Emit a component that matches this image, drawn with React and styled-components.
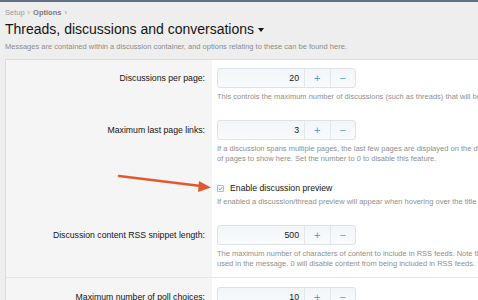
import React from "react";
import styled, { createGlobalStyle } from "styled-components";

const GlobalStyle = createGlobalStyle`
  html, body {
    margin: 0;
    overflow: hidden;
  }
  body {
    background: #eeeeee;
    font-family: "Liberation Sans", Arial, sans-serif;
    color: #141414;
  }
`;

const TopBar = styled.div`
  height: 2px;
  background: #5f7083;
`;

const Page = styled.div`
  position: relative;
  width: 680px;
`;

const Header = styled.div`
  padding: 6px 5px 0;
`;

const Crumbs = styled.div`
  font-size: 7.5px;
  line-height: 9px;
  color: #9b9b9b;

  b {
    color: #7a7a7a;
    font-weight: bold;
  }
  i {
    font-style: normal;
    margin: 0 3px;
  }
`;

const Title = styled.h1`
  margin: 4px 0 0;
  font-size: 14px;
  line-height: 17px;
  font-weight: normal;
  color: #141414;
  display: flex;
  align-items: center;
`;

const Caret = styled.span`
  display: inline-block;
  margin-left: 4px;
  margin-top: 1px;
  border-left: 3.5px solid transparent;
  border-right: 3.5px solid transparent;
  border-top: 4px solid #141414;
`;

const Desc = styled.div`
  margin-top: 4px;
  font-size: 7.5px;
  line-height: 10px;
  color: #8c8c8c;
`;

const Block = styled.div`
  margin: 7px 0 0 5px;
  border: 1px solid #dcdcdc;
  border-right: none;
  background: #fff;
`;

const Row = styled.div`
  display: grid;
  grid-template-columns: 206px 1fr;
  border-top: ${(p) => (p.$sep ? "1px solid #e6e6e6" : "none")};
`;

const Label = styled.div`
  background: #f5f5f5;
  padding: ${(p) => (p.$top ? p.$top : 8)}px 7px 0 0;
  text-align: right;
  font-size: 8.7px;
  line-height: 20px;
`;

const Field = styled.div`
  padding: ${(p) => (p.$top ? p.$top : 8)}px 0 ${(p) => (p.$bottom ? p.$bottom : 10)}px 5px;
`;

const Spinner = styled.div`
  display: flex;
  width: 139px;
  height: 20px;
  box-sizing: border-box;
  border: 1px solid #dbe2e9;
  border-radius: 3px;
  background: linear-gradient(180deg, #f3f6f9 0%, #f8fafc 100%);
  overflow: hidden;
`;

const NumBox = styled.div`
  flex: 0 0 87px;
  text-align: right;
  padding-right: 5px;
  box-sizing: border-box;
  font-size: 8.7px;
  line-height: 18px;
  color: #141414;
  border-right: 1px solid #e2e8ee;
`;

const StepBtn = styled.div`
  flex: 1;
  display: flex;
  align-items: center;
  justify-content: center;
  color: #4ea3dd;
  font-size: 11px;
  line-height: 18px;
  border-left: ${(p) => (p.$divided ? "1px solid #e2e8ee" : "none")};
`;

const Explain = styled.div`
  margin-top: ${(p) => (p.$gap ? p.$gap : 4)}px;
  font-size: 7.5px;
  line-height: 10px;
  color: #8f8f8f;
  white-space: nowrap;
`;

const CheckLine = styled.label`
  display: flex;
  align-items: center;
  height: 12px;
  font-size: 8.7px;
  color: #141414;
`;

const Box = styled.span`
  width: 7px;
  height: 7px;
  box-sizing: border-box;
  border: 1px solid #8cc2ea;
  border-radius: 1px;
  background: #f4f9fd;
  margin-right: 6px;
  display: flex;
  align-items: center;
  justify-content: center;
`;

const Arrow = styled.svg`
  position: absolute;
  left: 115px;
  top: 166px;
  pointer-events: none;
`;

const NumberRow = ({ label, value, children, sep, top, bottom }) => (
  <Row $sep={sep}>
    <Label $top={top}>{label}</Label>
    <Field $top={top} $bottom={bottom}>
      <Spinner>
        <NumBox>{value}</NumBox>
        <StepBtn>+</StepBtn>
        <StepBtn $divided>−</StepBtn>
      </Spinner>
      <Explain>{children}</Explain>
    </Field>
  </Row>
);

export default function App() {
  return (
    <>
      <GlobalStyle />
      <TopBar />
      <Page>
        <Header>
          <Crumbs>
            Setup<i>›</i>
            <b>Options</b>
            <i>›</i>
          </Crumbs>
          <Title>
            Threads, discussions and conversations
            <Caret />
          </Title>
          <Desc>
            Messages are contained within a discussion container, and options
            relating to these can be found here.
          </Desc>
        </Header>

        <Block>
          <NumberRow label="Discussions per page:" value="20">
            This controls the maximum number of discussions (such as threads)
            that will be displayed on a single page.
          </NumberRow>

          <NumberRow label="Maximum last page links:" value="3">
            If a discussion spans multiple pages, the last few pages are
            displayed on the discussion list. This is the maximum number
            <br />
            of pages to show here. Set the number to 0 to disable this feature.
          </NumberRow>

          <Row>
            <Label />
            <Field>
              <CheckLine>
                <Box>
                  <svg width="5" height="5" viewBox="0 0 5 5">
                    <path
                      d="M0.7 2.6 L2 3.8 L4.3 1.1"
                      fill="none"
                      stroke="#3d97d9"
                      strokeWidth="0.9"
                    />
                  </svg>
                </Box>
                Enable discussion preview
              </CheckLine>
              <Explain $gap={3}>
                If enabled a discussion/thread preview will appear when hovering
                over the title of the discussion in discussion lists.
              </Explain>
            </Field>
          </Row>

          <NumberRow
            label="Discussion content RSS snippet length:"
            value="500"
            bottom={8}
          >
            The maximum number of characters of content to include in RSS
            feeds. Note that this may be slightly exceeded by formatting
            <br />
            used in the message. 0 will disable content from being included in
            RSS feeds.
          </NumberRow>

          <NumberRow
            label="Maximum number of poll choices:"
            value="10"
            sep
            top={9}
          >
            The maximum number of choices that can be added to a poll.
          </NumberRow>
        </Block>

        <Arrow width="100" height="26" viewBox="0 0 100 26">
          <line
            x1="4"
            y1="8"
            x2="86"
            y2="18"
            stroke="#e2592f"
            strokeWidth="2.6"
            strokeLinecap="round"
          />
          <polygon points="96,19.5 84,13 83,24" fill="#e2592f" />
        </Arrow>
      </Page>
    </>
  );
}
